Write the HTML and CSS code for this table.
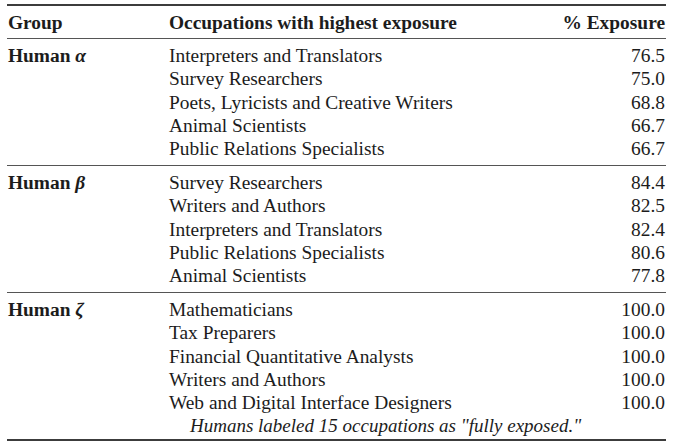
FILE: index.html
```html
<!DOCTYPE html>
<html>
<head>
<meta charset="utf-8">
<link rel="stylesheet" href="styles.css">
</head>
<body>
<table class="tbl">
  <thead>
    <tr>
      <th class="c-group">Group</th>
      <th class="c-occ">Occupations with highest exposure</th>
      <th class="c-num">% Exposure</th>
    </tr>
  </thead>
  <tbody class="grp">
    <tr><td class="c-group" rowspan="5"><b>Human <i>α</i></b></td><td class="c-occ">Interpreters and Translators</td><td class="c-num">76.5</td></tr>
    <tr><td class="c-occ">Survey Researchers</td><td class="c-num">75.0</td></tr>
    <tr><td class="c-occ">Poets, Lyricists and Creative Writers</td><td class="c-num">68.8</td></tr>
    <tr><td class="c-occ">Animal Scientists</td><td class="c-num">66.7</td></tr>
    <tr><td class="c-occ">Public Relations Specialists</td><td class="c-num">66.7</td></tr>
  </tbody>
  <tbody class="grp">
    <tr><td class="c-group" rowspan="5"><b>Human <i>β</i></b></td><td class="c-occ">Survey Researchers</td><td class="c-num">84.4</td></tr>
    <tr><td class="c-occ">Writers and Authors</td><td class="c-num">82.5</td></tr>
    <tr><td class="c-occ">Interpreters and Translators</td><td class="c-num">82.4</td></tr>
    <tr><td class="c-occ">Public Relations Specialists</td><td class="c-num">80.6</td></tr>
    <tr><td class="c-occ">Animal Scientists</td><td class="c-num">77.8</td></tr>
  </tbody>
  <tbody class="grp last">
    <tr><td class="c-group" rowspan="6"><b>Human <i>ζ</i></b></td><td class="c-occ">Mathematicians</td><td class="c-num">100.0</td></tr>
    <tr><td class="c-occ">Tax Preparers</td><td class="c-num">100.0</td></tr>
    <tr><td class="c-occ">Financial Quantitative Analysts</td><td class="c-num">100.0</td></tr>
    <tr><td class="c-occ">Writers and Authors</td><td class="c-num">100.0</td></tr>
    <tr><td class="c-occ">Web and Digital Interface Designers</td><td class="c-num">100.0</td></tr>
    <tr><td class="caption" colspan="2"><i>Humans labeled 15 occupations as "fully exposed."</i></td></tr>
  </tbody>
</table>
</body>
</html>
```
FILE: styles.css
```css
html, body {
  margin: 0;
  padding: 0;
  background: #ffffff;
}
body {
  padding: 4px 0 0 7px;
  font-family: "Liberation Serif", "Times New Roman", serif;
  font-size: 19.4px;
  color: #1c1c1c;
}
.tbl {
  width: 659px;
  border-collapse: collapse;
  border-top: 2px solid #3c3c3c;
  border-bottom: 2px solid #3c3c3c;
}
.tbl th, .tbl td {
  padding: 0;
  line-height: 23.2px;
  vertical-align: top;
  white-space: nowrap;
}
.tbl th {
  font-weight: bold;
  text-align: left;
  padding-top: 5px;
  padding-bottom: 4px;
}
thead tr {
  border-bottom: 1.5px solid #555;
}
.grp {
  border-bottom: 1.5px solid #555;
}
.grp.last {
  border-bottom: 2px solid #3c3c3c;
}
.grp tr:first-child td {
  padding-top: 5px;
}
.grp tr:last-child td {
  padding-bottom: 5px;
}
.grp.last tr:last-child td {
  padding-bottom: 2px;
}
.c-group {
  width: 161px;
  padding-left: 1px !important;
}
.c-occ {
  text-align: left;
}
.c-num {
  text-align: right !important;
  padding-right: 1px !important;
}
.caption {
  text-align: left;
  font-size: 19px;
  padding-left: 21px !important;
}
i {
  font-style: italic;
}
```
